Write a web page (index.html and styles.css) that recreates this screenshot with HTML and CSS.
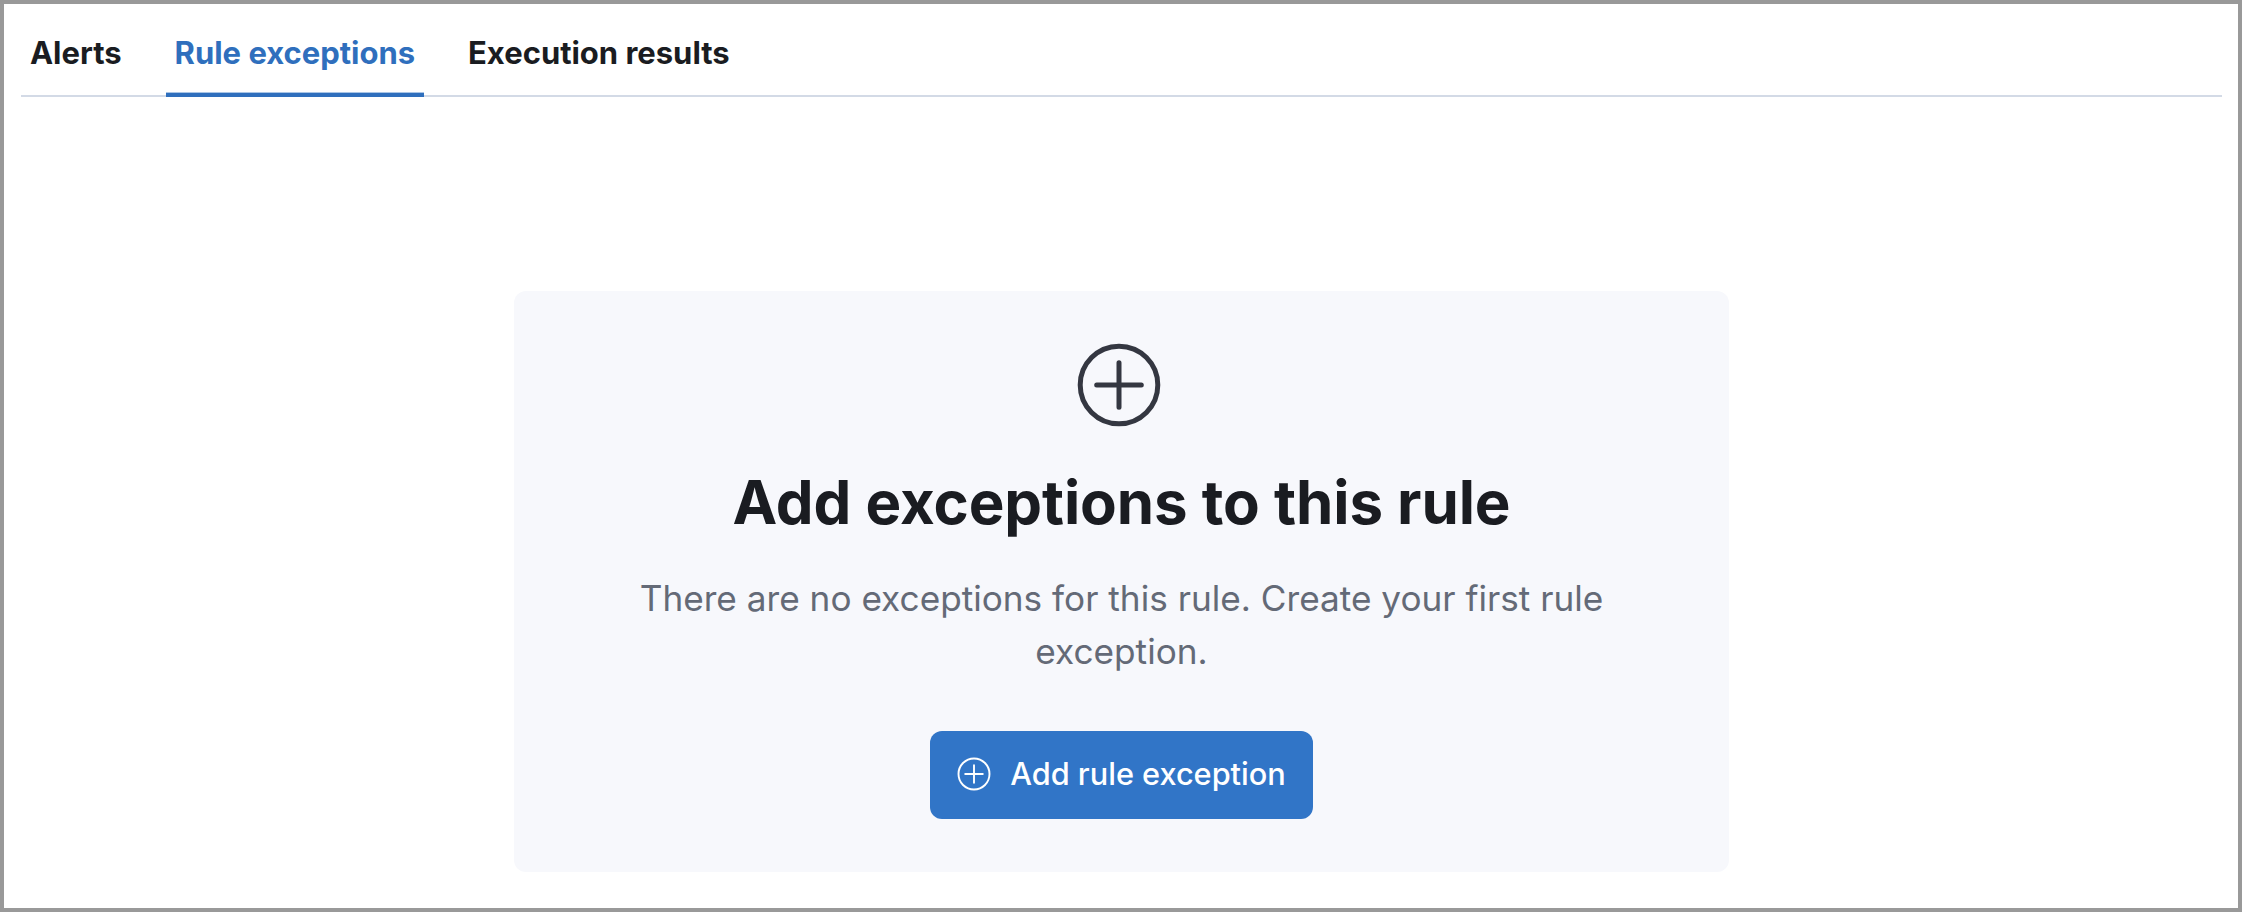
FILE: index.html
```
<!DOCTYPE html>
<html lang="en">
<head>
<meta charset="utf-8">
<title>Rule exceptions</title>
<link rel="stylesheet" href="styles.css">
</head>
<body>
<nav class="tabs">
<a class="tab">Alerts</a>
<a class="tab tab-active">Rule exceptions</a>
<a class="tab">Execution results</a>
</nav>
<main class="panel">
<svg class="panel-icon" viewBox="0 0 84 84" fill="none" stroke="#343741" stroke-width="5"><circle cx="42" cy="42" r="38.8"/><path d="M42 19.7v44.6M19.7 42h44.6" stroke-linecap="round"/></svg>
<h1 class="title">Add exceptions to this rule</h1>
<p class="body">There are no exceptions for this rule. Create your first rule exception.</p>
<button class="button"><svg class="button-icon" viewBox="0 0 34 34" fill="none" stroke="#fff" stroke-width="1.9"><circle cx="17" cy="17" r="15.5"/><path d="M17 8.2v17.6M8.2 17h17.6" stroke-linecap="round"/></svg><span>Add rule exception</span></button>
</main>
</body>
</html>
```
FILE: styles.css
```
* { box-sizing: border-box; }
body { margin: 0; height: 912px; border: 4px solid #999; background: #fff; font-family: Inter, sans-serif; padding: 0 16px 0 17px; overflow: hidden; color: #1a1c21; }
.tabs { display: flex; gap: 35px; height: 93px; border-bottom: 2px solid #d3dae6; }
.tab { height: 93px; padding: 0 9px; font-size: 31px; font-weight: 700; line-height: 98px; white-space: nowrap; letter-spacing: -0.02px; }
.tab-active { color: #2f6fbd; border-bottom: 4px solid #2f6fbd; box-shadow: inset 0 -1px 0 #a9c5e6; }
.panel { width: 1215px; height: 581px; margin: 194px auto 0; border-radius: 12px; background: #f7f8fc; display: flex; flex-direction: column; align-items: center; padding-top: 52px; }
.panel-icon { width: 84px; height: 84px; margin-right: 5px; }
.title { margin: 39px 0 0; font-size: 60px; line-height: 72px; font-weight: 700; white-space: nowrap; letter-spacing: -0.08px; }
.body { margin: 34px 0 0; width: 1020px; text-align: center; font-size: 35.2px; line-height: 53px; color: #646a77; }
.button { margin-top: 53px; width: 383px; height: 88px; border: 0; border-radius: 12px; background: #3175c7; color: #fff; font: 550 30.7px Inter, sans-serif; display: flex; align-items: center; justify-content: center; gap: 19px; padding: 0 0 3px; white-space: nowrap; }
.button-icon { width: 34px; height: 34px; }
```
